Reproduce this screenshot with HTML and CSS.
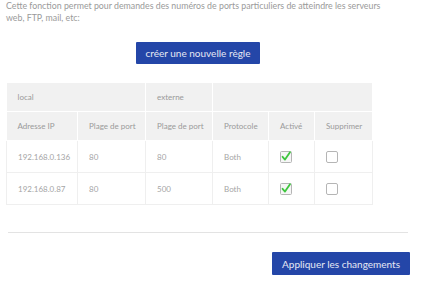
FILE: index.html
```html
<!DOCTYPE html>
<html lang="fr">
<head>
<meta charset="utf-8">
<link rel="stylesheet" href="styles.css">
</head>
<body>
<div class="page">
  <p class="intro">Cette fonction permet pour demandes des numéros de ports particuliers de atteindre les serveurs web, FTP, mail, etc:</p>
  <div class="create-row"><button class="btn btn-create">créer une nouvelle règle</button></div>
  <table class="rules">
    <colgroup>
      <col class="c1"><col class="c2"><col class="c3"><col class="c4"><col class="c5"><col class="c6">
    </colgroup>
    <thead>
      <tr><th colspan="2">local</th><th>externe</th><th colspan="3"></th></tr>
      <tr><th>Adresse IP</th><th>Plage de port</th><th>Plage de port</th><th>Protocole</th><th>Activé</th><th>Supprimer</th></tr>
    </thead>
    <tbody>
      <tr><td>192.168.0.136</td><td>80</td><td>80</td><td>Both</td>
        <td><svg class="cb" width="12" height="12" viewBox="0 0 12 12"><rect x="0.5" y="0.5" width="11" height="11" rx="1" fill="#f6f6f6" stroke="#b5b5b5"/><path d="M2.6 5.8 L5 8.6 L10 1.2" fill="none" stroke="#3fc63f" stroke-width="1.8" stroke-linecap="round" stroke-linejoin="round"/></svg></td>
        <td><svg class="cb" width="12" height="12" viewBox="0 0 12 12"><rect x="0.5" y="0.5" width="11" height="11" rx="1.5" fill="#fff" stroke="#b5b5b5"/></svg></td></tr>
      <tr><td>192.168.0.87</td><td>80</td><td>500</td><td>Both</td>
        <td><svg class="cb" width="12" height="12" viewBox="0 0 12 12"><rect x="0.5" y="0.5" width="11" height="11" rx="1" fill="#f6f6f6" stroke="#b5b5b5"/><path d="M2.6 5.8 L5 8.6 L10 1.2" fill="none" stroke="#3fc63f" stroke-width="1.8" stroke-linecap="round" stroke-linejoin="round"/></svg></td>
        <td><svg class="cb" width="12" height="12" viewBox="0 0 12 12"><rect x="0.5" y="0.5" width="11" height="11" rx="1.5" fill="#fff" stroke="#b5b5b5"/></svg></td></tr>
    </tbody>
  </table>
  <hr class="sep">
  <div class="apply-row"><button class="btn btn-apply">Appliquer les changements</button></div>
</div>
</body>
</html>
```
FILE: styles.css
```css
html, body {
  margin: 0;
  padding: 0;
  background: #fff;
}
.page {
  width: 404px;
  padding: 0 0 0 6px;
  font-family: Lato, "Open Sans", sans-serif;
  font-weight: 400;
  color: #9a9a9a;
}
.intro {
  margin: 0;
  font-size: 8.8px;
  line-height: 12px;
  width: 382px;
}
.create-row {
  padding-top: 17px;
  padding-left: 130px;
}
.btn {
  font-family: Lato, "Open Sans", sans-serif;
  font-weight: 400;
  background: #2446a8;
  color: #e6e9f4;
  border: none;
  border-radius: 1px;
  padding: 0;
  cursor: pointer;
}
.btn-create {
  width: 124px;
  height: 22px;
  font-size: 10px;
}
.rules {
  margin-top: 19px;
  border-collapse: collapse;
  width: 366px;
  table-layout: fixed;
  font-size: 8px;
}
.c1 { width: 71px; }
.c2 { width: 68px; }
.c3 { width: 67px; }
.c4 { width: 56px; }
.c5 { width: 46px; }
.c6 { width: 58px; }
.rules th {
  background: #f1f1f1;
  border: 1px solid #fff;
  font-weight: 400;
  text-align: left;
  padding: 0 0 0 11px;
  color: #9a9a9a;
  height: 28px;
}
.rules thead tr:first-child th {
  border-top: none;
}
.rules thead tr:first-child th:first-child,
.rules thead tr:nth-child(2) th:first-child {
  border-left: none;
}
.rules td {
  border: 1px solid #efefef;
  padding: 0 0 0 11px;
  height: 31px;
  color: #a5a5a5;
}
.cb {
  display: block;
}
.sep {
  margin: 27px 0 0 2px;
  width: 400px;
  border: none;
  border-top: 1px solid #e3e3e3;
  height: 0;
}
.apply-row {
  display: flex;
  justify-content: flex-end;
  padding-top: 19px;
}
.btn-apply {
  width: 138px;
  height: 23px;
  font-size: 10px;
}
```
